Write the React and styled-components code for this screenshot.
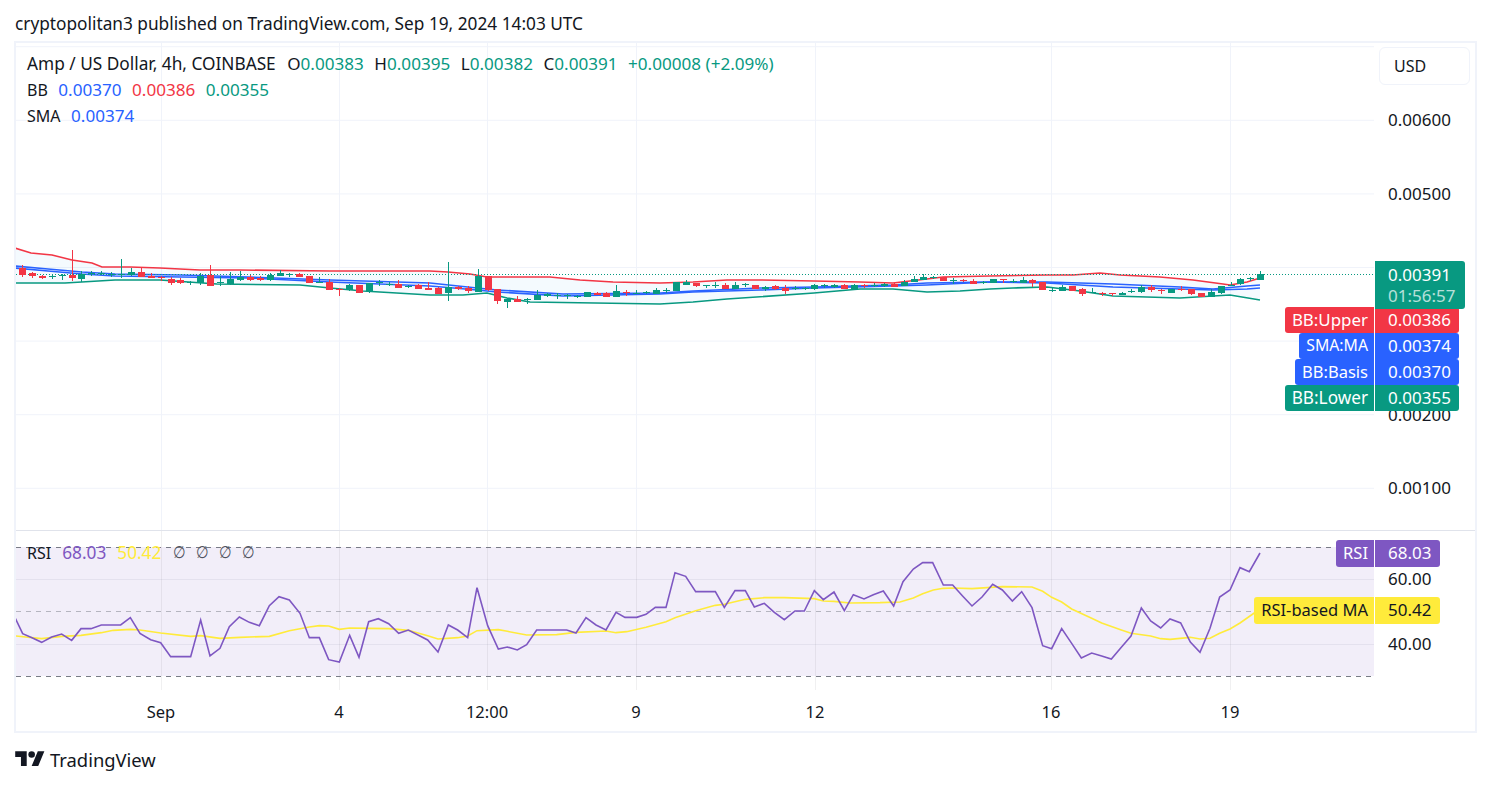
import styled, { createGlobalStyle } from "styled-components";

const UP = "#089981";
const DOWN = "#f23645";
const BLUE = "#2962ff";
const PURPLE = "#7e57c2";
const YELLOW = "#ffeb3b";
const INK = "#131722";
const GRID = "#f0f3fa";

// candles: [up, wickTop, wickBottom, bodyTop, bodyBottom], read in 3x units from a base y
const candleSegments = [
  [240, [
    [0,75,110,84,104],[0,95,113,100,107],[0,105,117,108,113],[1,103,117,109,111],[1,103,120,104,106],
    [0,30,122,105,113],[1,93,127,101,117],[1,93,107,99,101],[1,93,106,100,102],[1,97,111,102,104],
    [1,57,113,102,104],[1,85,107,97,104],[0,85,112,97,110],[0,100,115,108,113],[0,108,122,112,114],
    [0,110,134,118,129],[0,115,132,120,129],[1,122,135,127,129],[1,100,135,107,128],[0,75,137,105,137],
    [1,108,137,126,128],[1,97,135,118,133],[1,93,122,111,120],[0,105,122,112,120],[0,108,122,113,120],
    [1,100,122,105,120],[1,90,108,99,107],[1,98,110,102,104],[0,98,112,102,111],[0,108,130,108,129],
    [1,112,130,126,128],[0,118,150,127,150],
  ]],
  [250, [
    [0,115,137,116,118],[1,102,123,106,121],[0,105,130,105,130],[1,100,129,100,126],[1,90,107,95,99],
    [1,95,107,102,105],[0,90,115,102,114],[1,105,114,108,110],[0,102,117,105,117],[0,97,120,114,120],
    [0,112,132,113,132],[1,37,152,110,129],[0,108,120,112,117],[0,107,129,113,123],[1,57,126,78,126],
    [0,78,123,78,120],[0,117,161,117,152],[1,143,174,146,156],[0,138,157,148,156],[1,143,162,147,149],
    [1,120,150,136,150],[1,128,140,133,137],[1,129,147,134,137],[1,131,147,136,139],[1,135,143,138,140],
    [1,125,141,126,140],[0,125,136,128,135],[0,125,141,129,141],[1,105,141,123,141],[0,120,137,126,130],
    [1,120,133,128,130],[1,123,132,126,129],[1,115,132,121,131],
  ]],
  [260, [
    [1,85,100,91,94],[1,66,94,66,94],[1,60,75,65,74],[0,68,80,68,77],[1,75,83,76,78],
    [1,67,83,74,77],[0,70,87,75,87],[1,66,87,75,87],[1,69,80,73,75],[0,75,87,76,87],
    [1,78,93,80,87],[0,75,90,78,87],[0,76,102,84,93],[1,79,90,83,85],[1,81,90,84,87],
    [1,72,90,75,86],[1,72,84,76,78],[1,72,84,75,81],[0,72,87,75,87],[1,72,87,75,87],
    [0,72,84,75,77],[1,68,80,74,76],[1,68,80,72,78],[0,68,80,71,80],[1,60,78,66,77],
    [1,48,67,57,65],[1,42,60,51,59],[1,47,57,50,52],[0,50,63,51,63],[1,55,72,61,63],
    [0,58,66,61,63],[0,58,72,62,71],[1,62,72,66,68],
    [1,57,69,57,68],[0,57,68,58,60],[1,58,68,62,65],[1,50,70,60,69],[0,58,80,60,68],
    [0,66,90,66,90],[1,85,95,90,92],[1,75,93,81,92],[0,78,93,78,92],[0,85,107,87,101],
    [1,85,100,97,99],[0,97,107,100,102],[0,99,108,100,102],[1,95,106,99,105],[1,87,99,92,94],
    [1,75,99,80,95],[0,75,95,82,90],[0,87,102,90,93],[1,87,99,87,98],[0,78,93,87,89],
    [0,87,105,87,101],[0,99,112,99,112],[1,87,112,96,112],[1,78,102,78,98],[1,67,77,74,76],
    [1,54,75,57,71],[1,52,62,55,57],[1,33,60,43,59],
  ]],
];

const candles = candleSegments.flatMap(([base, rows]) =>
  rows.map(([up, wt, wb, bt, bb]) => ({
    up: !!up,
    wickTop: base + wt / 3,
    wickBottom: base + wb / 3,
    bodyTop: base + bt / 3,
    bodyBottom: base + bb / 3,
  }))
);

const upper = [[15,248],[31,253],[52,255],[72,260],[92,263],[102,267],[130,267],[160,268],[200,270],[240,270],[330,271],[430,271],[448,272],[470,274],[487,277],[550,277],[580,280],[613,282],[660,283],[693,282],[727,280],[760,280],[814,281],[860,282],[893,283],[927,279],[943,277],[990,276],[1047,275],[1073,275],[1100,273],[1120,275],[1160,277],[1193,280],[1223,284],[1230,285],[1247,282],[1260,278]];
const lower = [[15,283],[65,283],[115,280],[160,280],[217,284],[300,285],[330,288],[363,291],[430,295],[463,295],[487,293],[507,298],[530,302],[660,304],[693,302],[727,299],[814,293],[860,289],[893,289],[927,292],[960,291],[990,289],[1013,288],[1047,287],[1080,291],[1113,296],[1180,298],[1230,295],[1260,300]];
const basis = [[15,266],[48,269],[82,272],[115,274],[181,275],[248,277],[330,280],[430,283],[477,288],[497,290],[563,294],[660,293],[693,291],[760,288],[814,287],[893,285],[927,283],[990,282],[1047,283],[1113,287],[1180,289],[1213,290],[1247,289],[1260,288]];
const sma = [[15,268],[48,271],[82,274],[115,276],[181,277],[248,278],[330,282],[430,286],[477,290],[497,292],[563,296],[660,294],[693,292],[760,290],[814,288],[893,286],[927,285],[990,282],[1047,282],[1113,284],[1180,287],[1213,289],[1247,286],[1260,285]];

const rsiSegments = [
  [0, [[46,250],[68,296],[96,308],[125,322],[155,306],[185,297],[215,316],[243,281],[273,281],[304,270],[362,270],[391,248],[420,295],[452,314],[482,323],[512,365],[572,365],[602,255],[630,363],[660,340],[688,275],[718,246],[748,262],[778,272],[808,212],[837,185],[868,195],[900,235],[928,308],[958,308],[986,374],[1018,381],[1049,301],[1077,367],[1106,260],[1135,251],[1166,266],[1196,295],[1225,285],[1283,315],[1314,351]]],
  [440, [[25,270],[53,285],[83,308],[111,158],[143,272],[175,342],[202,336],[232,345],[260,329],[290,285],[380,285],[408,294],[438,248],[468,270],[498,285],[528,232],[555,247],[590,247],[618,238],[646,217],[678,217],[705,113],[737,124],[767,170],[826,170],[853,217],[885,167],[916,167],[943,216],[973,205],[1003,232],[1033,254],[1065,228],[1093,228],[1123,167],[1150,194],[1182,171],[1213,227],[1240,179],[1272,192],[1300,179],[1330,168]]],
  [880, [[41,213],[69,140],[100,102],[128,83],[158,83],[190,150],[218,150],[247,182],[276,213],[306,186],[338,148],[367,165],[397,198],[425,170],[456,218],[488,332],[515,341],[545,281],[575,325],[604,369],[635,354],[665,363],[694,372],[724,337],[753,303],[784,219],[812,258],[842,279],[870,252],[902,264],[931,321],[960,352],[990,280],[1019,186],[1050,165],[1080,98],[1108,110],[1140,54]]],
];

const rsiMaSegments = [
  [0, [[46,303],[125,311],[185,304],[243,301],[304,293],[340,286],[391,283],[420,285],[482,294],[572,304],[602,302],[660,310],[720,307],[808,304],[868,287],[928,276],[958,272],[986,273],[1018,283],[1049,279],[1106,280],[1166,281],[1225,286],[1283,302],[1314,312]]],
  [440, [[53,308],[83,303],[111,287],[175,284],[202,289],[260,300],[350,299],[408,292],[498,288],[528,293],[560,290],[618,277],[678,260],[705,248],[767,227],[826,211],[853,208],[916,193],[973,188],[1033,188],[1123,191],[1150,198],[1182,199],[1230,204]]],
  [880, [[0,203],[60,201],[100,189],[128,176],[160,165],[190,160],[218,159],[276,161],[367,155],[456,156],[488,169],[515,187],[545,201],[575,222],[635,250],[665,264],[724,285],[753,295],[812,303],[842,311],[870,313],[931,307],[960,312],[990,310],[1019,295],[1050,282],[1080,264],[1140,222]]],
];

const unpack = (segments) =>
  segments.flatMap(([x0, pts]) => pts.map(([x, y]) => [x0 + x / 3, 535 + y / 3]));

const toPoints = (pts) => pts.map(([x, y]) => `${x},${y}`).join(" ");

const ticks = [
  { x: 161, label: "Sep" },
  { x: 339, label: "4" },
  { x: 487, label: "12:00" },
  { x: 636, label: "9" },
  { x: 815, label: "12" },
  { x: 1051, label: "16" },
  { x: 1230, label: "19" },
];

const priceY = (p) => 488.3 - ((p - 0.001) / 0.001) * 73.6;
const priceLines = [0.007, 0.006, 0.005, 0.004, 0.003, 0.002, 0.001];
const priceLabels = [0.006, 0.005, 0.002, 0.001];

const GlobalStyle = createGlobalStyle`
  html, body {
    margin: 0;
    background: #fff;
    overflow: hidden;
  }
  body {
    font-family: "Noto Sans", sans-serif;
    color: ${INK};
  }
`;

const Page = styled.div`
  width: 1491px;
  height: 785px;
  display: flex;
  flex-direction: column;
`;

const Published = styled.div`
  height: 41px;
  padding: 13px 0 0 15px;
  box-sizing: border-box;
  font-size: 17.25px;
  line-height: 22px;
  white-space: nowrap;
`;

const Frame = styled.div`
  margin-left: 14px;
  width: 1463px;
  height: 692px;
  box-sizing: border-box;
  border: 2px solid ${GRID};
  display: grid;
  grid-template-columns: 1358px 1fr;
  grid-template-rows: 487px 1px 159px 1fr;
`;

const Pane = styled.div`
  position: relative;
  overflow: hidden;
`;

const Plot = styled.svg`
  display: block;
  width: 100%;
  height: 100%;
`;

const Divider = styled.div`
  grid-column: 1 / -1;
  background: #e0e3eb;
`;

const Axis = styled.div`
  position: relative;
  font-size: 17px;
`;

const UsdButton = styled.div`
  margin: 4px 0 0 5px;
  width: 91px;
  height: 38px;
  box-sizing: border-box;
  border: 1px solid ${GRID};
  border-radius: 6px;
  padding-left: 14px;
  display: flex;
  align-items: center;
  font-size: 16px;
`;

const AxisLabel = styled.div`
  position: absolute;
  left: 14px;
  transform: translateY(-50%);
  line-height: 22px;
`;

const Legend = styled.div`
  position: absolute;
  top: 8px;
  left: 11px;
  display: flex;
  flex-direction: column;
  font-size: 17.1px;
  line-height: 26px;
  white-space: nowrap;
`;

const LegendRow = styled.div`
  display: flex;
  gap: 10.5px;
`;

const Title = styled.span`
  font-size: 17.25px;
  margin-right: 1px;
`;

const Key = styled.span`
  font-size: 16px;
`;

const Ohlc = styled.span`
  color: ${UP};
`;

const OhlcKey = styled.span`
  color: ${INK};
`;

const Val = styled.span`
  color: ${(p) => p.$color};
`;

const RsiLegend = styled(LegendRow)`
  position: absolute;
  top: 9px;
  left: 11px;
  gap: 11px;
  font-size: 17.25px;
  line-height: 26px;
`;

const NoValue = styled.span`
  width: 12px;
  text-align: center;
  color: #50535e;
  font-family: "Liberation Sans", sans-serif;
  font-size: 17px;
  transform: scaleX(0.85);
`;

const LastTag = styled.div`
  position: absolute;
  top: 218px;
  left: 1px;
  width: 90px;
  height: 48px;
  z-index: 2;
  box-sizing: border-box;
  padding: 3px 0 0 13px;
  background: ${UP};
  color: #fff;
  border-radius: 0 3px 3px 0;
  line-height: 21px;
`;

const Countdown = styled.div`
  opacity: 0.7;
`;

const TagStack = styled.div`
  position: absolute;
  top: ${(p) => p.$top}px;
  right: ${(p) => p.$right}px;
  display: flex;
  flex-direction: column;
  align-items: flex-end;
`;

const TagRow = styled.div`
  display: flex;
  height: ${(p) => p.$h}px;
  gap: 1px;
  white-space: nowrap;
`;

const TagName = styled.div`
  display: flex;
  align-items: center;
  padding: 0 6px 2px 7px;
  font-size: ${(p) => p.$size}px;
  background: ${(p) => p.$bg};
  color: ${(p) => p.$fg || "#fff"};
  border-radius: 3px 0 0 3px;
`;

const TagValue = styled.div`
  width: ${(p) => p.$w}px;
  box-sizing: border-box;
  padding: 0 0 2px 13px;
  display: flex;
  align-items: center;
  background: ${(p) => p.$bg};
  color: ${(p) => p.$fg || "#fff"};
  border-radius: 0 3px 3px 0;
`;

const TimeAxis = styled.div`
  position: relative;
  font-size: 16.5px;
`;

const TimeLabel = styled.span`
  position: absolute;
  top: 11px;
  transform: translateX(-50%);
  line-height: 22px;
`;

const Footer = styled.div`
  display: flex;
  align-items: center;
  gap: 5px;
  padding: 15px 0 0 15px;
`;

const LogoMark = styled.svg`
  width: 30px;
  height: 23px;
  fill: ${INK};
`;

const LogoText = styled.span`
  font-size: 18.4px;
  line-height: 23px;
`;

const MainPlot = () => (
  <Plot viewBox="16 43 1358 487">
    {priceLines.map((p) => (
      <line key={p} x1="16" x2="1374" y1={priceY(p)} y2={priceY(p)} stroke={GRID} />
    ))}
    {ticks.map((t) => (
      <line key={t.x} x1={t.x + 0.5} x2={t.x + 0.5} y1="43" y2="530" stroke={GRID} />
    ))}
    <polygon
      points={toPoints([...upper, ...[...lower].reverse()])}
      fill="#2196f3"
      fillOpacity="0.05"
    />
    <polyline points={toPoints(upper)} fill="none" stroke={DOWN} strokeWidth="1.6" />
    <polyline points={toPoints(lower)} fill="none" stroke={UP} strokeWidth="1.6" />
    <polyline points={toPoints(basis)} fill="none" stroke={BLUE} strokeWidth="1.6" />
    <polyline points={toPoints(sma)} fill="none" stroke={BLUE} strokeWidth="1.6" />
    <line x1="16" x2="1374" y1="274.5" y2="274.5" stroke={UP} strokeDasharray="1 2" />
    <g shapeRendering="crispEdges">
      {candles.map((c, i) => {
        const x = Math.round(22 + i * 9.906);
        const color = c.up ? UP : DOWN;
        return (
          <g key={i} fill={color}>
            <rect x={x} y={c.wickTop} width="1" height={c.wickBottom - c.wickTop} />
            <rect x={x - 3} y={c.bodyTop} width="7" height={Math.max(c.bodyBottom - c.bodyTop, 1)} />
          </g>
        );
      })}
    </g>
  </Plot>
);

const RsiPlot = () => (
  <Plot viewBox="16 531 1358 159">
    <rect x="16" y="547" width="1358" height="129" fill={PURPLE} fillOpacity="0.1" />
    <line x1="16" x2="1374" y1="579.5" y2="579.5" stroke="#e4e1ee" />
    <line x1="16" x2="1374" y1="644.5" y2="644.5" stroke="#e4e1ee" />
    {ticks.map((t) => (
      <line key={t.x} x1={t.x + 0.5} x2={t.x + 0.5} y1="531" y2="690" stroke="#6a6d78" strokeOpacity="0.1" />
    ))}
    <line x1="16" x2="1374" y1="547.5" y2="547.5" stroke="#787b86" strokeDasharray="5 5" />
    <line x1="16" x2="1374" y1="611.5" y2="611.5" stroke="#787b86" strokeOpacity="0.5" strokeDasharray="5 5" />
    <line x1="16" x2="1374" y1="676.5" y2="676.5" stroke="#787b86" strokeDasharray="5 5" />
    <polyline points={toPoints(unpack(rsiMaSegments))} fill="none" stroke={YELLOW} strokeWidth="1.6" />
    <polyline points={toPoints(unpack(rsiSegments))} fill="none" stroke={PURPLE} strokeWidth="1.6" />
  </Plot>
);

const bbTags = [
  { name: "BB:Upper", value: "0.00386", bg: DOWN, size: 16.9 },
  { name: "SMA:MA", value: "0.00374", bg: BLUE, size: 15.8 },
  { name: "BB:Basis", value: "0.00370", bg: BLUE, size: 16.5 },
  { name: "BB:Lower", value: "0.00355", bg: UP, size: 17.2 },
];

const App = () => (
  <Page>
    <GlobalStyle />
    <Published>cryptopolitan3 published on TradingView.com, Sep 19, 2024 14:03 UTC</Published>
    <Frame>
      <Pane>
        <MainPlot />
        <Legend>
          <LegendRow>
            <Title>Amp / US Dollar, 4h, COINBASE</Title>
            <Ohlc><OhlcKey>O</OhlcKey>0.00383</Ohlc>
            <Ohlc><OhlcKey>H</OhlcKey>0.00395</Ohlc>
            <Ohlc><OhlcKey>L</OhlcKey>0.00382</Ohlc>
            <Ohlc><OhlcKey>C</OhlcKey>0.00391</Ohlc>
            <Ohlc>+0.00008 (+2.09%)</Ohlc>
          </LegendRow>
          <LegendRow>
            <Key>BB</Key>
            <Val $color={BLUE}>0.00370</Val>
            <Val $color={DOWN}>0.00386</Val>
            <Val $color={UP}>0.00355</Val>
          </LegendRow>
          <LegendRow>
            <Key>SMA</Key>
            <Val $color={BLUE}>0.00374</Val>
          </LegendRow>
        </Legend>
      </Pane>
      <Axis>
        <UsdButton>USD</UsdButton>
        {priceLabels.map((p) => (
          <AxisLabel key={p} style={{ top: priceY(p) - 43 }}>{p.toFixed(5)}</AxisLabel>
        ))}
        <LastTag>
          0.00391
          <Countdown>01:56:57</Countdown>
        </LastTag>
        <TagStack $top={264} $right={16}>
          {bbTags.map((t) => (
            <TagRow key={t.name} $h={26}>
              <TagName $bg={t.bg} $size={t.size}>{t.name}</TagName>
              <TagValue $w={84} $bg={t.bg}>{t.value}</TagValue>
            </TagRow>
          ))}
        </TagStack>
      </Axis>
      <Divider />
      <Pane>
        <RsiPlot />
        <RsiLegend>
          <Key>RSI</Key>
          <Val $color={PURPLE}>68.03</Val>
          <Val $color={YELLOW}>50.42</Val>
          <NoValue>∅</NoValue>
          <NoValue>∅</NoValue>
          <NoValue>∅</NoValue>
          <NoValue>∅</NoValue>
        </RsiLegend>
      </Pane>
      <Axis>
        <AxisLabel style={{ top: 48 }}>60.00</AxisLabel>
        <AxisLabel style={{ top: 113 }}>40.00</AxisLabel>
        <TagStack $top={9} $right={35}>
          <TagRow $h={27}>
            <TagName $bg={PURPLE} $size={16.5}>RSI</TagName>
            <TagValue $w={65} $bg={PURPLE}>68.03</TagValue>
          </TagRow>
        </TagStack>
        <TagStack $top={66} $right={35}>
          <TagRow $h={27}>
            <TagName $bg={YELLOW} $fg={INK} $size={16.5}>RSI-based MA</TagName>
            <TagValue $w={65} $bg={YELLOW} $fg={INK}>50.42</TagValue>
          </TagRow>
        </TagStack>
      </Axis>
      <TimeAxis>
        {ticks.map((t) => (
          <TimeLabel key={t.x} style={{ left: t.x - 16 }}>{t.label}</TimeLabel>
        ))}
      </TimeAxis>
    </Frame>
    <Footer>
      <LogoMark viewBox="0 0 36 28">
        <path d="M14 22H7V11H0V4h14v18zM28 22h-8l7.5-18h8L28 22z" />
        <circle cx="20" cy="8" r="4" />
      </LogoMark>
      <LogoText>TradingView</LogoText>
    </Footer>
  </Page>
);

export default App;
